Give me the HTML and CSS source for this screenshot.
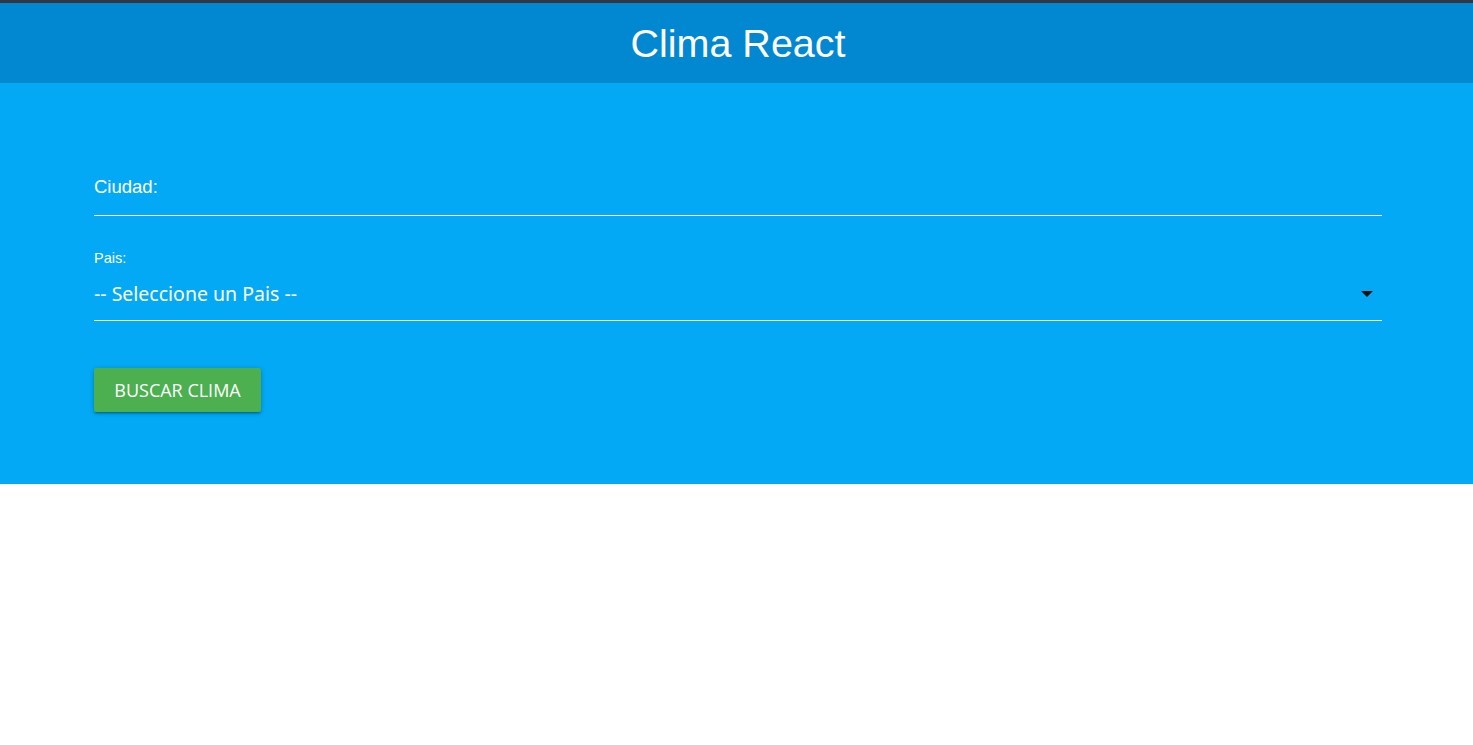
FILE: index.html
```html
<!DOCTYPE html>
<html lang="es">
<head>
<meta charset="utf-8">
<title>Clima React</title>
<link rel="stylesheet" href="styles.css">
</head>
<body>
<div class="topline"></div>
<header class="header">
  <h1 class="brand">Clima React</h1>
</header>
<main class="main">
  <form class="form">
    <div class="field field-city">
      <label class="label-city">Ciudad:</label>
    </div>
    <div class="field field-country">
      <label class="label-country">Pais:</label>
      <div class="select">
        <span class="select-text">-- Seleccione un Pais --</span>
        <span class="caret"></span>
      </div>
    </div>
    <button type="button" class="btn">BUSCAR CLIMA</button>
  </form>
</main>
</body>
</html>
```

FILE: styles.css
```css
* { box-sizing: border-box; }
html, body { margin: 0; padding: 0; background: #ffffff; }
body { font-family: "Liberation Sans", Arial, sans-serif; }

.topline { height: 3px; background: #323740; }

.header {
  height: 80px;
  background: #0288d1;
  display: flex;
  align-items: center;
  justify-content: center;
}
.brand {
  margin: 0;
  color: #fff;
  font-weight: 400;
  font-size: 39.5px;
  line-height: 1;
  padding-left: 3px;
  padding-top: 2px;
}

.main {
  background: #03a9f4;
  height: 401px;
  padding: 0 91px 0 94px;
}
.form { padding-top: 92px; }

.field-city {
  height: 41px;
  border-bottom: 1px solid #fff;
}
.label-city {
  display: block;
  color: #fff;
  font-size: 18.5px;
  line-height: 20px;
  padding-top: 2px;
}

.field-country {
  margin-top: 34px;
  border-bottom: 1px solid #fff;
}
.label-country {
  display: block;
  color: #fff;
  font-size: 14.5px;
  line-height: 16px;
}
.select {
  display: flex;
  align-items: center;
  justify-content: space-between;
  height: 54px;
  padding-bottom: 0;
}
.select-text {
  color: #fff;
  font-family: "Noto Sans", "Open Sans", sans-serif;
  font-size: 19.5px;
}
.caret {
  width: 0; height: 0;
  border-left: 6px solid transparent;
  border-right: 6px solid transparent;
  border-top: 6px solid #111;
  margin-right: 9px;
  margin-top: 2px;
}

.btn {
  margin-top: 47px;
  width: 167px;
  height: 44px;
  border: none;
  border-radius: 2px;
  background: #4caf50;
  color: #fff;
  font-family: "Open Sans", "Noto Sans", sans-serif;
  font-size: 18px;
  padding: 0;
  box-shadow: 0 2px 2px 0 rgba(0,0,0,0.14), 0 3px 1px -2px rgba(0,0,0,0.12), 0 1px 5px 0 rgba(0,0,0,0.2);
}
```
